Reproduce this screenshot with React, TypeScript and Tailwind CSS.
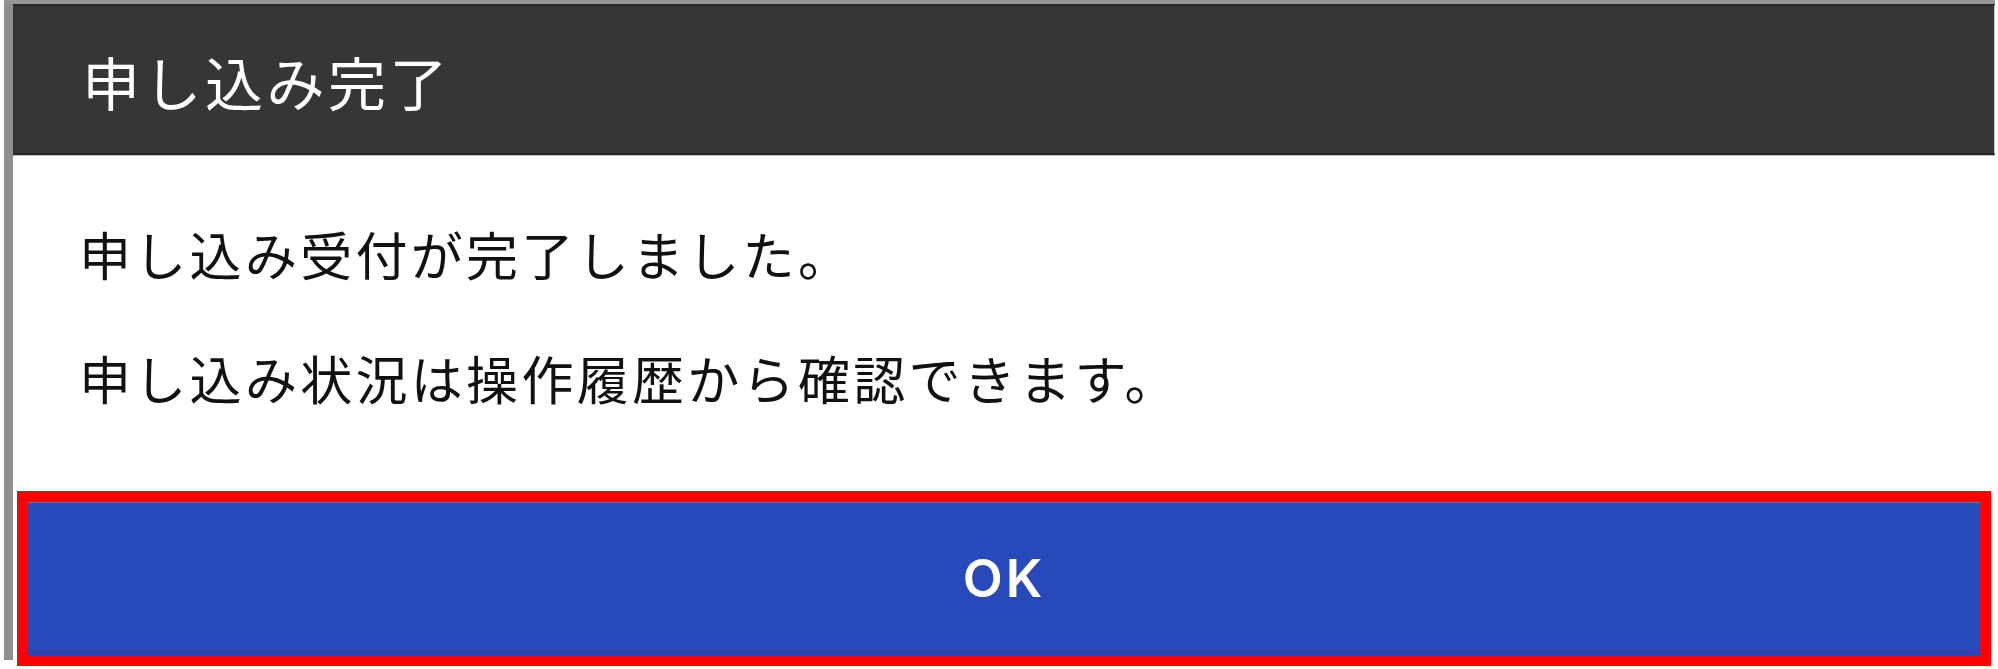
export default function App() {
  return (
    <div className="flex h-[669px] w-[1998px] flex-col overflow-hidden bg-white pl-[4px] font-['Noto_Sans_CJK_JP','Noto_Sans',sans-serif]">
      {/* top strip of the page behind the dialog */}
      <div className="h-[4px] w-[1991px] shrink-0 bg-[#969696]" />
      <div className="flex items-start">
        <div className="h-[656px] w-[9px] shrink-0 bg-[#8f8f8f]" />
        <div className="flex w-[1982px] flex-col">
          <div className="h-[151px] border-t-2 border-b-2 border-r border-t-[#2b2b2b] border-b-[#262626] border-r-[#c4c4c4] bg-[#363636] pl-[69px] pt-[46px]">
            <h1 className="text-[58px] leading-none tracking-[3.5px] text-white">申し込み完了</h1>
          </div>
          <div className="h-px bg-[#bdbdbd]" />
          <div className="flex flex-col gap-[72px] pl-[66px] pt-[72px] text-[52px] leading-none tracking-[3.3px] text-[#111]">
            <p>申し込み受付が完了しました。</p>
            <p>申し込み状況は操作履歴から確認できます。</p>
          </div>
          <div className="mx-[4px] mt-[87px] border-[11px] border-[#ff0000]">
            <button className="flex h-[153px] w-full items-center justify-center border-t border-b border-t-[#5b6fc6] border-b-[#1f42b4] bg-[#2749b9] font-['Inter',sans-serif] text-[52px] font-semibold leading-none tracking-[3px] text-white">
              OK
            </button>
          </div>
        </div>
      </div>
    </div>
  );
}
